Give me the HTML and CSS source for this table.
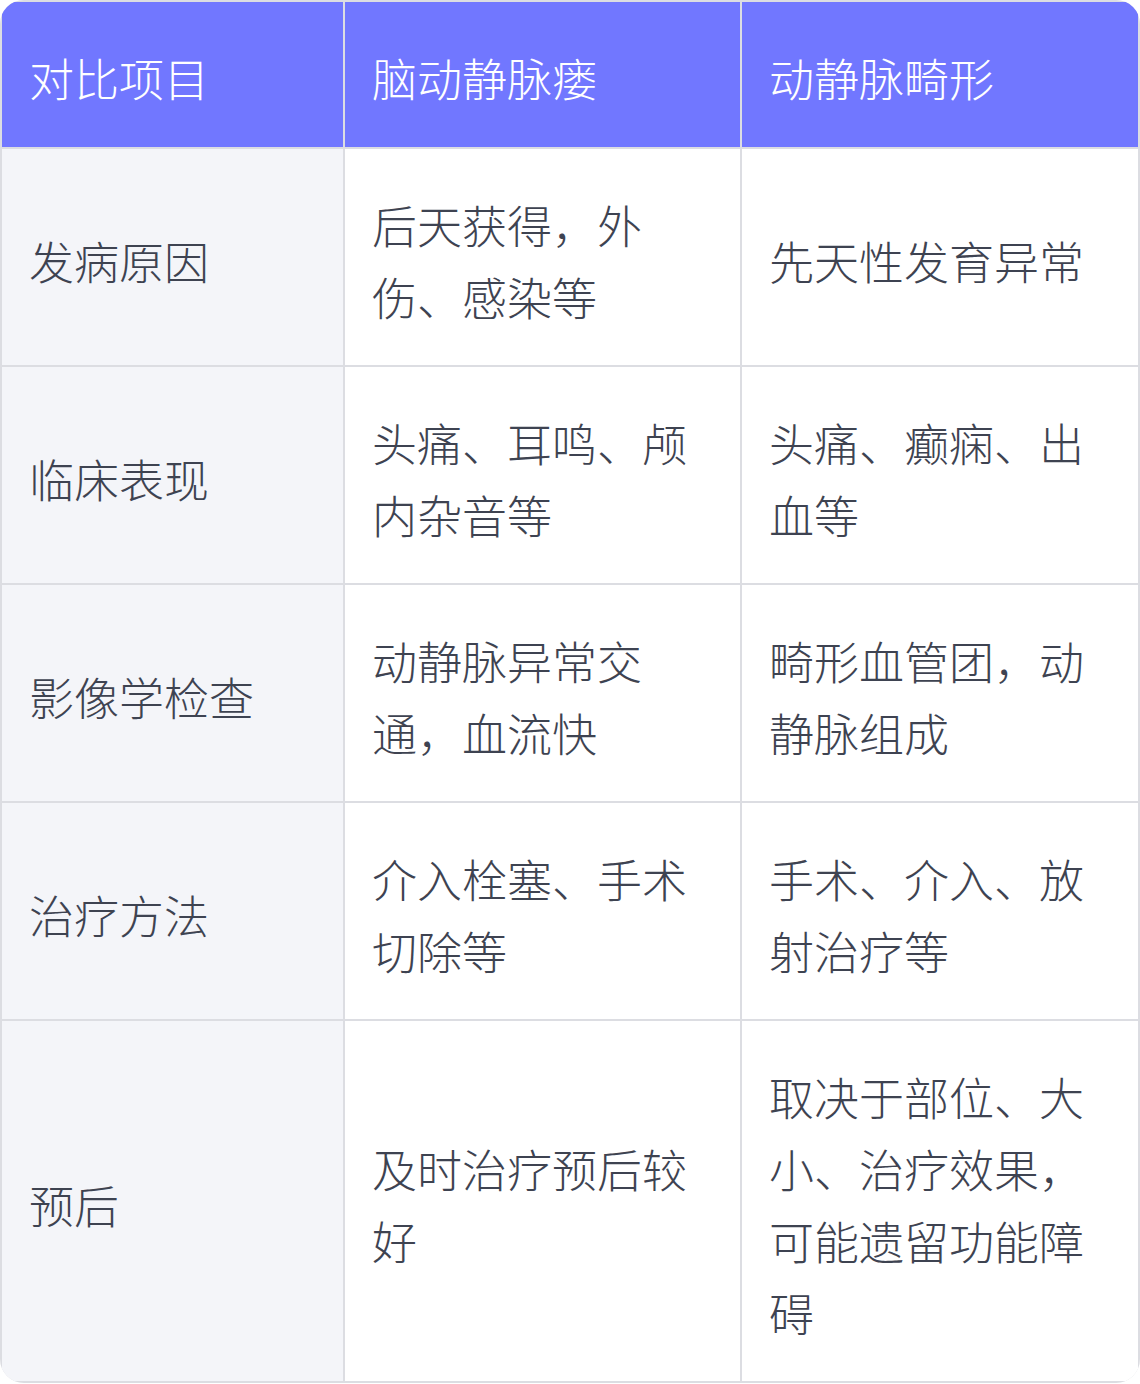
FILE: index.html
```html
<!DOCTYPE html>
<html lang="zh-CN">
<head>
<meta charset="utf-8">
<link rel="stylesheet" href="styles.css">
</head>
<body>
<div class="table">
  <div class="cell head">对比项目</div>
  <div class="cell head">脑动静脉瘘</div>
  <div class="cell head">动静脉畸形</div>

  <div class="cell label">发病原因</div>
  <div class="cell">后天获得，外伤、感染等</div>
  <div class="cell">先天性发育异常</div>

  <div class="cell label">临床表现</div>
  <div class="cell">头痛、耳鸣、颅内杂音等</div>
  <div class="cell">头痛、癫痫、出血等</div>

  <div class="cell label">影像学检查</div>
  <div class="cell">动静脉异常交通，血流快</div>
  <div class="cell">畸形血管团，动静脉组成</div>

  <div class="cell label">治疗方法</div>
  <div class="cell">介入栓塞、手术切除等</div>
  <div class="cell">手术、介入、放射治疗等</div>

  <div class="cell label">预后</div>
  <div class="cell">及时治疗预后较好</div>
  <div class="cell">取决于部位、大小、治疗效果，可能遗留功能障碍</div>
</div>
</body>
</html>
```
FILE: styles.css
```css
html, body {
  margin: 0;
  padding: 0;
  background: #ffffff;
}
body {
  font-family: "Noto Sans CJK SC", "Noto Sans", sans-serif;
}
.table {
  width: 1140px;
  box-sizing: border-box;
  display: grid;
  grid-template-columns: 341px 395px 396px;
  gap: 2px;
  padding: 2px;
  background: #dcdde2;
  border-radius: 24px;
  overflow: hidden;
}
.cell {
  display: flex;
  align-items: center;
  padding: 40px 24px 32px 27px;
  font-size: 45px;
  font-weight: 300;
  line-height: 72px;
  color: #3e4351;
  background: #ffffff;
  word-break: break-all;
}
.cell.head {
  background: #7177ff;
  color: #ffffff;
  padding-top: 40px;
  padding-bottom: 33px;
}
.cell.label {
  background: #f4f5f9;
}
```
